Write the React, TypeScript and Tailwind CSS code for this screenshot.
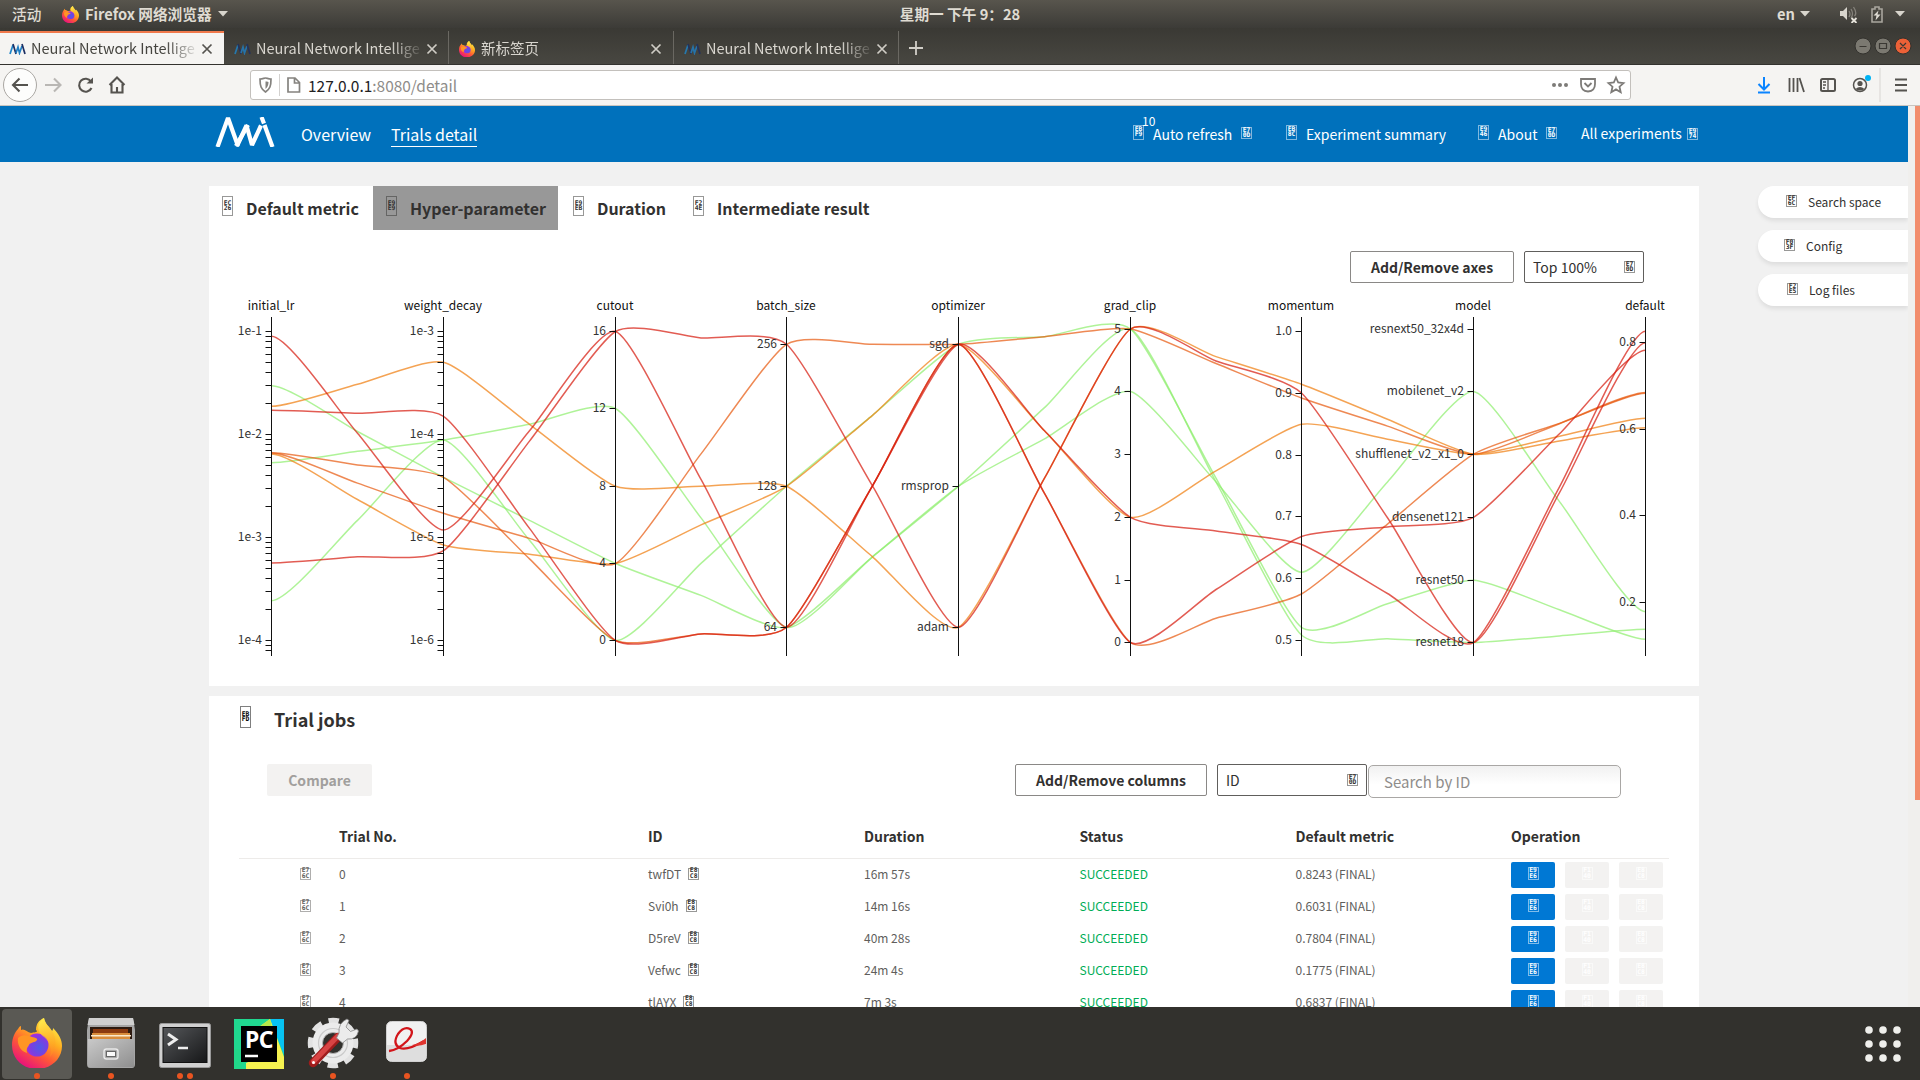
import React from "react";

type BoxProps = { code: string; className?: string };

/** Four hex digits in a frame, the browser's stand-in for an icon-font glyph. */
function Hex({ code, className = "w-[11px] h-[12px]" }: BoxProps) {
  return (
    <span
      className={`inline-flex shrink-0 flex-col items-center justify-center border border-current/50 font-['DejaVu_Sans_Mono'] text-[6.400px] font-bold leading-[5.500px] ${className}`}
    >
      <span>{code.slice(0, 2)}</span>
      <span>{code.slice(2)}</span>
    </span>
  );
}

function Firefox({ size }: { size: number }) {
  return (
    <svg width={size} height={size} viewBox="0 0 50 50" className="shrink-0">
      <defs>
        <linearGradient id="fxBody" x1="0.8" y1="0.05" x2="0.25" y2="0.95">
          <stop offset="0" stopColor="#fff04a" />
          <stop offset="0.35" stopColor="#ffae20" />
          <stop offset="0.65" stopColor="#ff5a35" />
          <stop offset="1" stopColor="#e8127c" />
        </linearGradient>
        <radialGradient id="fxCore" cx="0.6" cy="0.6" r="0.6">
          <stop offset="0" stopColor="#4f5ae8" />
          <stop offset="0.6" stopColor="#7a3fe0" />
          <stop offset="1" stopColor="#a32ee0" />
        </radialGradient>
        <linearGradient id="fxTail" x1="0" y1="0" x2="0.3" y2="1">
          <stop offset="0" stopColor="#fff352" />
          <stop offset="1" stopColor="#ff9a1f" stopOpacity="0.4" />
        </linearGradient>
      </defs>
      <path
        d="M32 0c1 6 5 8 8 13 1-1 1-2 1-3 6 6 9 12 9 18 0 13-11 23-25 23S0 41 0 27C0 20 3 14 6 11c1-2 2-3 3-3v4c3-2 6 2 10 3 4-1 8-1 5-3 0-6 3-10 8-12z"
        fill="url(#fxBody)"
      />
      <circle cx="25" cy="27" r="11.5" fill="url(#fxCore)" />
      <path d="M32 0c1 6 5 8 8 13 5 7 5 18-2 26 2-8 0-15-6-20-6-4-9-12 0-19z" fill="url(#fxTail)" />
      <path d="M6 20c4-4 9-3 14-1 3 1 6 1 5 3-2 3-7 2-8 5-1 2-3 3-2 8C8 33 5 26 6 20z" fill="#ff9524" />
    </svg>
  );
}

function NniMark({ dim }: { dim?: boolean }) {
  return (
    <svg width="17" height="12" viewBox="0 0 17 12" className={dim ? "shrink-0 opacity-80" : "shrink-0"} fill="none" strokeWidth="1.7">
      <path d="M1 11L4 2" stroke="#1f86c9" />
      <path d="M4 1l3 10" stroke="#1c2f63" />
      <path d="M7 10l2-6 1.5 6L13 3" stroke="#1f7fc4" />
      <path d="M13 1l3 10" stroke="#1c2f63" />
    </svg>
  );
}

function TabX({ className }: { className: string }) {
  return (
    <svg width="12" height="12" viewBox="0 0 12 12" className={`shrink-0 ${className}`} stroke="currentColor" strokeWidth="1.7">
      <path d="M1.5 1.5l9 9M10.5 1.5l-9 9" />
    </svg>
  );
}

function BrowserTab({ title, active, fox }: { title: string; active?: boolean; fox?: boolean }) {
  return (
    <div
      className={
        active
          ? "flex h-[33px] w-[224px] items-center border-t-2 border-[#f0794b] bg-[#f5f4f2] pl-[9px] pr-[11px] text-[#45443f]"
          : "flex h-[33px] w-[225px] items-center border-r border-[#6a6862] pt-0.5 pl-[10px] pr-[11px] text-[#d9d6cf]"
      }
    >
      <span className="flex w-[22px] shrink-0">{fox ? <Firefox size={16} /> : <NniMark dim={!active} />}</span>
      <span className="mr-1.5 flex-1 whitespace-nowrap pb-0.5 text-[14.500px] leading-6 [mask-image:linear-gradient(to_right,black_82%,rgba(0,0,0,0.15))]">
        {title}
      </span>
      <TabX className={active ? "text-[#55534f]" : "text-[#cfccc5]"} />
    </div>
  );
}

const Caret = () => (
  <svg width="10" height="6" viewBox="0 0 10 6" className="shrink-0">
    <path d="M0 0h10L5 5.5z" fill="#d8d5cd" />
  </svg>
);

function SystemBar() {
  return (
    <div className="flex h-7 items-center bg-linear-to-b from-[#58554d] to-[#3c3b37] text-[14.670px] leading-7 text-[#dfdbd2]">
      <div className="flex w-[800px] items-center pl-3 font-bold">
        <span className="w-[50px] font-medium">活动</span>
        <Firefox size={17} />
        <span className="ml-1.5 mr-1.5 font-bold">Firefox 网络浏览器</span>
        <Caret />
      </div>
      <div className="w-[320px] text-center font-bold">星期一 下午 9：28</div>
      <div className="flex w-[800px] items-center justify-end pr-[15px]">
        <span className="mr-[5px] font-bold">en</span>
        <Caret />
        <svg width="18" height="18" viewBox="0 0 18 18" className="ml-[30px] mr-[-1px]" fill="none">
          <path d="M0 6h3l4-4v13l-4-4H0z" fill="#d8d5cd" />
          <path d="M9 6q2 3 0 6M11 4q3 5 0 9M13.500 2q4 6 1 9" stroke="#85827b" strokeWidth="1.300" />
          <path d="M11.500 13l5 5M16.500 13l-5 5" stroke="#e5e2da" strokeWidth="1.800" />
        </svg>
        <svg width="12" height="17" viewBox="0 0 12 17" className="ml-3.5">
          <path d="M1 3h3V1h4v2h3v13H1z" fill="none" stroke="#a9a69e" strokeWidth="1.600" />
          <path d="M7.500 4.500l-5 5h3l-1 5 5-6h-3z" fill="#e0ddd5" />
        </svg>
        <span className="ml-3 flex">
          <Caret />
        </span>
      </div>
    </div>
  );
}

function TabStrip() {
  return (
    <div className="flex h-[37px] items-end border-b border-[#33322e] bg-linear-to-b from-[#3a3934] to-[#484741]">
      <BrowserTab title="Neural Network Intellige" active />
      <BrowserTab title="Neural Network Intellige" />
      <BrowserTab title="新标签页" fox />
      <BrowserTab title="Neural Network Intellige" />
      <svg width="14" height="14" viewBox="0 0 14 14" className="mb-[9px] ml-[10px]" stroke="#d2cfc8" strokeWidth="1.8">
        <path d="M7 0v14M0 7h14" />
      </svg>
      <svg width="60" height="20" viewBox="0 0 60 20" className="mb-2 ml-auto mr-2">
        <circle cx="11" cy="10" r="8" fill="#7b7971" stroke="#33322e" />
        <circle cx="31" cy="10" r="8" fill="#7b7971" stroke="#33322e" />
        <circle cx="51" cy="10" r="8" fill="#ec6137" stroke="#33322e" />
        <path d="M7.500 10.500h7M27.500 7.500h7v5h-7zM48 7l6 6M54 7l-6 6" stroke="#3a3833" strokeWidth="1.200" fill="none" />
      </svg>
    </div>
  );
}

function Toolbar() {
  return (
    <div className="flex h-[41px] items-center border-b border-[#c9c5c0] bg-[#f5f4f2]">
      <svg width="250" height="40" viewBox="0 0 250 40" className="shrink-0" fill="none" strokeWidth="2.100">
        <circle cx="20" cy="20" r="16.500" fill="#fdfdfc" stroke="#aaa7a3" strokeWidth="1" />
        <path d="M28 20H13M19.500 13.500L13 20l6.500 6.500" stroke="#55534f" />
        <path d="M45 20h15M54 13.500l6.500 6.500-6.500 6.500" stroke="#b9b7b4" />
        <path d="M91 16.500A6.500 6.500 0 1 0 91.500 23" stroke="#55534f" />
        <path d="M93 12.500v6h-6.500z" fill="#55534f" />
        <path d="M109.500 20l7.500-7.500 7.500 7.500M111.500 19v8.500h11V19M117 27v-5" stroke="#55534f" />
      </svg>
      <div className="flex h-[30px] w-[1381px] items-center rounded-[3px] border border-[#c3c0bc] bg-white pl-2">
        <svg width="44" height="24" viewBox="0 0 44 24" fill="none" stroke="#85837f" strokeWidth="1.700">
          <path d="M1 6c3 0 4-1 5.500-1S9 6 12 6c0 7-1 10-5.500 13C2 16 1 13 1 6z" />
          <path d="M6.500 8.500c2 0 3 .5 3 .5 0 3-1 5-3 7z" fill="#85837f" stroke="none" />
          <path d="M20.500 1v22" stroke="#d3d1cf" strokeWidth="1" />
          <path d="M29 5h7l4.500 4.500V19H29zM35.500 5v5h5" />
        </svg>
        <span className="ml-[5px] text-[15.450px] leading-7 text-[#8e8c89]">
          <span className="text-[#22211f]">127.0.0.1</span>:8080/detail
        </span>
        <svg width="78" height="24" viewBox="0 0 78 24" className="ml-auto mr-0.5" fill="none" stroke="#7d7b78" strokeWidth="1.800">
          <g fill="#7d7b78" stroke="none">
            <circle cx="4" cy="12" r="2" />
            <circle cx="10" cy="12" r="2" />
            <circle cx="16" cy="12" r="2" />
          </g>
          <path d="M31 6h14v5q0 7-7 7.500Q31 18 31 11zM34.500 10l3.500 3.500 3.500-3.500" />
          <path d="M66 4.500l2.200 5 5.300.6-4 3.600 1.200 5.500-4.700-2.800-4.700 2.800 1.200-5.500-4-3.600 5.300-.6z" />
        </svg>
      </div>
      <svg width="170" height="40" viewBox="1750 0 170 40" className="ml-auto shrink-0" fill="none" stroke="#55534f" strokeWidth="2">
        <path d="M1764 12v12M1758.500 19l5.500 5.500 5.500-5.500M1758 27.500h12" stroke="#0a84ff" />
        <path d="M1789.500 13v14M1793.500 13v14M1797.500 13v14M1799.500 13l4.500 14" strokeWidth="1.800" />
        <rect x="1821" y="14" width="14" height="12" rx="1.500" />
        <path d="M1828 14v12M1823 17h3M1823 20h3M1823 23h2" strokeWidth="1.300" />
        <circle cx="1860" cy="20" r="6.500" strokeWidth="1.500" />
        <circle cx="1860" cy="18.500" r="2.600" fill="#55534f" stroke="none" />
        <path d="M1855.500 24q4.500-4 9 0-4.500 3-9 0z" fill="#55534f" stroke="none" />
        <circle cx="1868" cy="13" r="3" fill="#00b3f4" stroke="none" />
        <path d="M1880 3v34" stroke="#d8d5d2" strokeWidth="1" />
        <path d="M1895 14.500h12M1895 20h12M1895 25.500h12" />
      </svg>
    </div>
  );
}

function NavBar() {
  return (
    <div className="flex h-14 items-center bg-[#0071bc] pl-[215px] text-[16px] leading-6 text-white">
      <svg width="60" height="30" viewBox="0 0 60 30" className="-mt-1 shrink-0" fill="none" stroke="#fff" strokeWidth="4.200">
        <path d="M2.500 30L13 1l10 28M21 29L33 8" strokeLinejoin="bevel" />
        <path d="M22 29L31.500 8.500 37 28 46 8.500" strokeLinejoin="bevel" />
        <path d="M46.500 0L49 6.500M49.500 8L57.500 30" />
      </svg>
      <span className="ml-[26px] w-[90px]">Overview</span>
      <span className="mt-0.5 h-6 border-b border-white leading-[23px]">Trials detail</span>
      <div className="ml-auto flex w-[775px] items-center whitespace-nowrap text-[14px]">
        <span className="relative flex w-[20px] pb-1">
          <Hex code="EBF9" className="h-[15px] w-[11px]" />
          <span className="absolute -top-3.5 left-[9px] text-[12px] leading-5">10</span>
        </span>
        <span className="w-[88px]">Auto refresh</span>
        <span className="flex w-[45px] pb-0.5"><Hex code="E70D" /></span>
        <span className="flex w-[20px] pb-1"><Hex code="EB8C" className="h-[15px] w-[11px]" /></span>
        <span className="w-[172px]">Experiment summary</span>
        <span className="flex w-[20px] pb-1"><Hex code="E946" className="h-[15px] w-[11px]" /></span>
        <span className="w-12">About</span>
        <span className="flex w-[35px] pb-0.5"><Hex code="E70D" /></span>
        <span className="w-[106px] pb-0.5">All experiments</span>
        <Hex code="E974" />
      </div>
    </div>
  );
}

const tabs = [
  { label: "Default metric", code: "EC26", cls: "w-[164px]" },
  { label: "Hyper-parameter", code: "E9E9", cls: "w-[185px] bg-[#989898]" },
  { label: "Duration", code: "E9EB", cls: "w-[121px] pl-[15px]" },
  { label: "Intermediate result", code: "F24E", cls: "w-[200px] pl-[14px]" },
];

const AXIS_TOP = 317;
const AXIS_BOTTOM = 656;

type Tick = [string, number];
const axes: { name: string; x: number; ticks: Tick[]; log?: boolean }[] = [
  { name: "initial_lr", x: 271.5, log: true, ticks: [["1e-1", 331.5], ["1e-2", 434.5], ["1e-3", 537.5], ["1e-4", 640.5]] },
  { name: "weight_decay", x: 443.5, log: true, ticks: [["1e-3", 331.5], ["1e-4", 434.5], ["1e-5", 537.5], ["1e-6", 640.5]] },
  { name: "cutout", x: 615.5, ticks: [["16", 331.5], ["12", 408.5], ["8", 486.5], ["4", 563.5], ["0", 640.5]] },
  { name: "batch_size", x: 786.5, ticks: [["256", 344.5], ["128", 486.5], ["64", 627.5]] },
  { name: "optimizer", x: 958.5, ticks: [["sgd", 344.5], ["rmsprop", 486.5], ["adam", 627.5]] },
  { name: "grad_clip", x: 1130.5, ticks: [["5", 329.5], ["4", 391.5], ["3", 454.5], ["2", 517.5], ["1", 580.5], ["0", 642.5]] },
  { name: "momentum", x: 1301.5, ticks: [["1.0", 331.5], ["0.9", 393.5], ["0.8", 455.5], ["0.7", 516.5], ["0.6", 578.5], ["0.5", 640.5]] },
  { name: "model", x: 1473.5, ticks: [["resnext50_32x4d", 329.5], ["mobilenet_v2", 391.5], ["shufflenet_v2_x1_0", 454.5], ["densenet121", 517.5], ["resnet50", 580.5], ["resnet18", 642.5]] },
  { name: "default", x: 1645.5, ticks: [["0.8", 342.5], ["0.6", 429.5], ["0.4", 515.5], ["0.2", 602.5]] },
];

const RED = "#d71d10";
const DARK = "#e75b12";
const ORANGE = "#f07f12";
const GREEN = "#90ee70";

const trials: { color: string; ys: number[] }[] = [
  { color: GREEN, ys: [385.7, 477.3, 563.5, 627.3, 486.3, 329, 635, 642.5, 629.3] },
  { color: GREEN, ys: [462.7, 440, 408.5, 627.3, 486.3, 391.5, 572.3, 391.5, 611.7] },
  { color: GREEN, ys: [600.7, 440, 640.5, 486.3, 344.3, 329, 627.3, 580.2, 639.3] },
  { color: ORANGE, ys: [406.3, 362.3, 486.3, 486.3, 627.3, 329, 384.3, 454.2, 427.7] },
  { color: ORANGE, ys: [454, 545, 563.5, 486.3, 344.3, 517.3, 424.3, 454.2, 418.3] },
  { color: DARK, ys: [452.7, 477.3, 640.5, 627.3, 344.3, 642.5, 594, 454.2, 392.5] },
  { color: DARK, ys: [453, 513.3, 563.5, 344.3, 344.3, 329, 398, 454.2, 393.2] },
  { color: RED, ys: [410.3, 416.3, 640.5, 627.3, 344.3, 642.5, 536.5, 517.3, 350.3] },
  { color: RED, ys: [336.3, 530, 331.5, 627.3, 344.3, 517.3, 544.5, 642.5, 331.3] },
  { color: RED, ys: [563, 550.7, 331.5, 344.3, 627.3, 329, 393, 642.5, 342.7] },
];

/** Bezier chain through each axis crossing and each midpoint between axes. */
function curve(ys: number[]) {
  const a = 0.1;
  const pts: [number, number][] = [];
  ys.forEach((y, i) => {
    pts.push([axes[i].x, y]);
    if (i < ys.length - 1) pts.push([(axes[i].x + axes[i + 1].x) / 2, (y + ys[i + 1]) / 2]);
  });
  const last = pts.length - 1;
  let d = `M${pts[0][0]} ${pts[0][1]}`;
  for (let i = 0; i < last; i++) {
    const p = pts[i];
    const q = pts[i + 1];
    const out = i === 0 ? [p[0] + 2 * a * (q[0] - p[0]), p[1]] : [p[0] + a * (q[0] - pts[i - 1][0]), p[1] + a * (q[1] - pts[i - 1][1])];
    const inn = i + 1 === last ? [q[0] - 2 * a * (q[0] - p[0]), q[1]] : [q[0] - a * (pts[i + 2][0] - p[0]), q[1] - a * (pts[i + 2][1] - p[1])];
    d += `C${out[0]} ${out[1]} ${inn[0]} ${inn[1]} ${q[0]} ${q[1]}`;
  }
  return d;
}

function minorTicks() {
  const out: number[] = [];
  for (let dec = 0; dec < 4; dec++)
    for (let m = 9; m > 1; m--) {
      const y = 331.5 + 103 * (dec + 1 - Math.log10(m));
      if (y < AXIS_BOTTOM - 3) out.push(Math.floor(y) + 0.5);
    }
  return out;
}

function ParallelChart() {
  return (
    <svg width="1490" height="380" viewBox="209 290 1490 380" className="block">
      <g fill="none" strokeWidth="1.500" strokeOpacity="0.72">
        {trials.map((t, i) => (
          <path key={i} d={curve(t.ys)} stroke={t.color} />
        ))}
      </g>
      {axes.map((ax) => (
        <g key={ax.name} stroke="#111" strokeWidth="1">
          <path d={`M${ax.x} ${AXIS_TOP}V${AXIS_BOTTOM}`} />
          {ax.log && minorTicks().map((y) => <path key={y} d={`M${ax.x - 6} ${y}h6`} />)}
          {ax.ticks.map(([label, y]) => (
            <g key={label}>
              <path d={`M${ax.x - 6} ${y}h6`} />
              <text x={ax.x - 9.5} y={y + 3.5} textAnchor="end" stroke="none" fill="#333" fontSize="12">
                {label}
              </text>
            </g>
          ))}
          <text x={ax.x - 0.5} y="310" textAnchor="middle" stroke="none" fill="#111" fontSize="12">
            {ax.name}
          </text>
        </g>
      ))}
    </svg>
  );
}

const rows = [
  ["0", "twfDT", "16m 57s", "0.8243 (FINAL)"],
  ["1", "Svi0h", "14m 16s", "0.6031 (FINAL)"],
  ["2", "D5reV", "40m 28s", "0.7804 (FINAL)"],
  ["3", "Vefwc", "24m 4s", "0.1775 (FINAL)"],
  ["4", "tlAYX", "7m 3s", "0.6837 (FINAL)"],
];

const COLS = "grid grid-cols-[100px_309px_216px_215.500px_216px_215.500px_158px]";

function TrialJobs() {
  return (
    <div className="mt-[10px] h-[330px] bg-white pl-[30px]">
      <div className="flex h-[54px] items-center">
        <Hex code="EBFD" className="ml-px mb-3 h-[22px] w-[11px]" />
        <span className="ml-[23px] -mt-2 text-[18px] font-bold leading-6 text-[#323130]">Trial jobs</span>
      </div>
      <div className="mt-[14px] flex h-[34px] items-start pl-7 text-[14px]">
        <div className="flex h-8 w-[105px] items-center justify-center rounded-[2px] bg-[#f3f2f1] font-bold text-[#a19f9d]">Compare</div>
        <div className="ml-[643px] flex h-8 w-[192px] items-center justify-center rounded-[2px] border border-[#8a8886] font-bold text-[#323130]">
          Add/Remove columns
        </div>
        <div className="ml-[10px] flex h-8 w-[150px] items-center justify-between rounded-[2px] border border-[#605e5c] pl-2 pr-2 text-[#323130]">
          ID
          <Hex code="E70D" />
        </div>
        <div className="ml-px mt-px flex h-[33px] w-[253px] items-center rounded-[5px] border border-[#a9a7a5] bg-linear-to-b from-[#f1f1f1] to-white to-60% pl-[15px] pt-px text-[15px] text-[#8f8d8b]">
          Search by ID
        </div>
      </div>
      <div className={`${COLS} h-[61px] w-[1430px] items-center border-b border-[#edebe9] pt-[17px] text-[14px] font-bold text-[#323130]`}>
        <span />
        <span>Trial No.</span>
        <span>ID</span>
        <span>Duration</span>
        <span>Status</span>
        <span>Default metric</span>
        <span>Operation</span>
      </div>
      {rows.map(([no, id, dur, metric]) => (
        <div key={no} className={`${COLS} h-8 w-[1430px] items-center text-[12px] leading-5 text-[#605e5c]`}>
          <span className="flex pl-[61px] pb-[3px]"><Hex code="E76C" /></span>
          <span className="pb-0.5">{no}</span>
          <span className="flex items-center gap-[7px] pb-0.5">
            {id}
            <span className="mb-px flex text-[#323130]"><Hex code="E8C8" /></span>
          </span>
          <span className="pb-0.5">{dur}</span>
          <span className="pb-0.5 text-[#00ad56]">SUCCEEDED</span>
          <span className="pb-0.5">{metric}</span>
          <span className="flex gap-[10px]">
            <span className="flex h-[26px] w-11 items-center justify-center rounded-[2px] bg-[#0078d4] pb-[3px] text-white">
              <Hex code="E9E6" className="h-[13px] w-[11px]" />
            </span>
            <span className="flex h-[26px] w-11 items-center justify-center rounded-[2px] bg-[#f3f2f1] pb-[3px] text-white">
              <Hex code="F140" className="h-[13px] w-[11px]" />
            </span>
            <span className="flex h-[26px] w-11 items-center justify-center rounded-[2px] bg-[#f3f2f1] pb-[3px] text-white">
              <Hex code="E8C8" className="h-[13px] w-[11px]" />
            </span>
          </span>
        </div>
      ))}
    </div>
  );
}

function Page() {
  return (
    <div className="flex h-[901px] overflow-hidden bg-[#f1f1f1]">
      <div className="w-[1908px] shrink-0">
        <NavBar />
        <div className="flex justify-between pl-[209px] pt-6">
          <div className="w-[1490px]">
            <div className="h-[500px] bg-white">
              <div className="flex h-11 text-[#323130]">
                {tabs.map((t) => (
                  <div key={t.label} className={`flex items-start pl-[13px] pt-[10px] ${t.cls}`}>
                    <Hex code={t.code} className="h-5 w-[11px]" />
                    <span className="ml-[13px] whitespace-nowrap text-[16px] font-bold leading-6">{t.label}</span>
                  </div>
                ))}
              </div>
              <div className="mt-[21px] flex h-[39px] items-start gap-[10px] pl-[1141px] text-[14px] text-[#323130]">
                <div className="flex h-8 w-[164px] items-center justify-center rounded-[2px] border border-[#8a8886] font-bold">Add/Remove axes</div>
                <div className="flex h-8 w-[120px] items-center justify-between rounded-[2px] border border-[#605e5c] pl-2 pr-2">
                  Top 100%
                  <Hex code="E70D" />
                </div>
              </div>
              <ParallelChart />
            </div>
            <TrialJobs />
          </div>
          <div className="flex w-[150px] flex-col gap-3 text-[12px] text-[#323130]">
            {[
              ["EF6C", "Search space", "pl-7"],
              ["F03F", "Config", "pl-[26px]"],
              ["F2E5", "Log files", "pl-[29px]"],
            ].map(([code, label, pad]) => (
              <div key={label} className={`flex h-8 items-center gap-[11px] rounded-l-[17px] bg-white shadow-[0_3px_4px_rgba(0,0,0,0.08)] ${pad}`}>
                <span className="mb-0.5 flex"><Hex code={code} /></span>
                {label}
              </div>
            ))}
          </div>
        </div>
      </div>
      <div className="flex w-3 justify-end bg-[#f0efed]">
        <div className="h-[694px] w-[5px] bg-[#f28d6c]" />
      </div>
    </div>
  );
}

const Dots = ({ n }: { n: number }) => (
  <div className="flex h-[6px] justify-center gap-1">
    {Array.from({ length: n }, (_, i) => (
      <span key={i} className="size-[6px] rounded-full bg-[#e95420]" />
    ))}
  </div>
);

function DockItem({ dots, active, children }: { dots: number; active?: boolean; children: React.ReactNode }) {
  return (
    <div className={`flex h-[70px] w-[70px] flex-col items-center rounded-[4px] ${active ? "bg-[#5a5954]" : ""}`}>
      <div className="flex h-16 w-[54px] items-center justify-center pt-1">{children}</div>
      <Dots n={dots} />
    </div>
  );
}

function Dock() {
  return (
    <div className="flex h-[73px] items-start gap-1 bg-[#32312d] pl-0.5 pt-0.5">
      <DockItem dots={1} active>
        <Firefox size={50} />
      </DockItem>
      <DockItem dots={1}>
        <svg width="50" height="52" viewBox="0 0 50 52">
          <defs>
            <linearGradient id="cab" x1="0" y1="0" x2="1" y2="1">
              <stop offset="0" stopColor="#c9c9c9" />
              <stop offset="1" stopColor="#8f8f8f" />
            </linearGradient>
          </defs>
          <path d="M3 1h44l2 12v34q0 4-3 4H4q-3 0-3-4V13z" fill="#a5a5a5" />
          <path d="M3 1h44l1.500 7h-47z" fill="#cfcfcf" />
          <path d="M4 10h42v12H4z" fill="#2c1a10" />
          <path d="M7 12h35v4H7z" fill="#8b3a10" />
          <path d="M6 16h38v6H6z" fill="#d98d3c" />
          <path d="M5 18h40v1.500H5z" fill="#fbe9cc" />
          <path d="M2 22h46v28H2z" fill="url(#cab)" />
          <rect x="18" y="32" width="14" height="10" rx="2.500" fill="#a9a9a9" stroke="#e8e8e8" strokeWidth="1.500" />
          <rect x="20.500" y="34.500" width="9" height="5" fill="#fafafa" stroke="#666" />
        </svg>
      </DockItem>
      <DockItem dots={2}>
        <svg width="52" height="46" viewBox="0 0 52 46" className="mt-1.5">
          <defs>
            <linearGradient id="term" x1="0" y1="0" x2="1" y2="1">
              <stop offset="0" stopColor="#55575a" />
              <stop offset="1" stopColor="#161718" />
            </linearGradient>
          </defs>
          <rect x="0.500" y="0.500" width="51" height="44" rx="2" fill="#d0d0d0" stroke="#9a9a9a" />
          <rect x="4" y="4.500" width="44" height="35" fill="url(#term)" stroke="#111" />
          <path d="M9 11l8 5.500L9 22" fill="none" stroke="#eee" strokeWidth="3" />
          <path d="M19 25h10" stroke="#eee" strokeWidth="2.500" />
        </svg>
      </DockItem>
      <DockItem dots={0}>
        <span className="relative mt-0.5 flex size-[50px] items-center justify-center">
          <svg width="50" height="50" viewBox="0 0 50 50" className="absolute inset-0">
            <path d="M0 0h50v50H0z" fill="#20d890" />
            <path d="M36 0h14v36z" fill="#07c3f2" />
            <path d="M25 8L36 0l3 8 11 30v12H12V44l30-14V8z" fill="#f6f250" />
            <path d="M25 8L36 0l2 8z" fill="#b6ea4a" />
            <path d="M0 30h8v20H0z" fill="#21d789" />
            <path d="M7 7h36v36H7z" fill="#000" />
            <path d="M11 37h13" stroke="#fff" strokeWidth="2.500" />
          </svg>
          <span className="relative -mt-[10px] font-['Noto_Sans'] text-[23px] font-bold leading-5 tracking-tight text-white">PC</span>
        </span>
      </DockItem>
      <DockItem dots={1}>
        <svg width="52" height="52" viewBox="0 0 52 52">
          <circle cx="26" cy="26" r="21.500" fill="none" stroke="#e2e2e2" strokeWidth="7.500" strokeDasharray="10 6.886" strokeDashoffset="5" />
          <circle cx="26" cy="26" r="15.500" fill="none" stroke="#ebebeb" strokeWidth="10" />
          <circle cx="26" cy="26" r="14.500" fill="none" stroke="#cacaca" strokeWidth="1.200" />
          <circle cx="26" cy="26" r="10.500" fill="none" stroke="#b5b5b5" strokeWidth="1" />
          <path d="M6 46L31 20" stroke="#9f1c1c" strokeWidth="8.500" strokeLinecap="round" />
          <path d="M6.500 44.500L31 19" stroke="#d84444" strokeWidth="5" strokeLinecap="round" />
          <path d="M32 16q-1-10 8-14l2 1.500-3 6.500 4.500 4.500L50 12l1.500 2q-2 9-11 8l-5 4-6-5z" fill="#ececec" stroke="#888" strokeWidth="0.800" />
          <circle cx="6.500" cy="45.500" r="1.500" fill="#fff" />
        </svg>
      </DockItem>
      <DockItem dots={1}>
        <svg width="42" height="42" viewBox="0 0 42 42" className="-mt-0.5">
          <rect x="0.500" y="0.500" width="40" height="40" rx="5" fill="#f1f1f1" stroke="#d0d0d0" />
          <path d="M1 24h39v12q0 4-4 4H5q-4 0-4-4z" fill="#dedede" />
          <path d="M3 30q9-1 18-10 8-9 3-12-6-3-12 5-6 10 2 14 7 3 24-7" fill="none" stroke="#d2151a" strokeWidth="2.300" />
          <path d="M26 24q7-1 14-7v6q-8 3-14 1z" fill="#e0352f" />
        </svg>
      </DockItem>
      <svg width="36" height="36" viewBox="0 0 36 36" className="ml-auto mr-[19px] mt-[17px]" fill="#efefec">
        {[4, 18, 32].map((y) => [4, 18, 32].map((x) => <circle key={`${x}-${y}`} cx={x} cy={y} r="3.800" />))}
      </svg>
    </div>
  );
}

export default function App() {
  return (
    <div className="h-[1080px] w-[1920px] overflow-hidden font-['Noto_Sans_CJK_SC',sans-serif]">
      <SystemBar />
      <TabStrip />
      <Toolbar />
      <Page />
      <Dock />
    </div>
  );
}
